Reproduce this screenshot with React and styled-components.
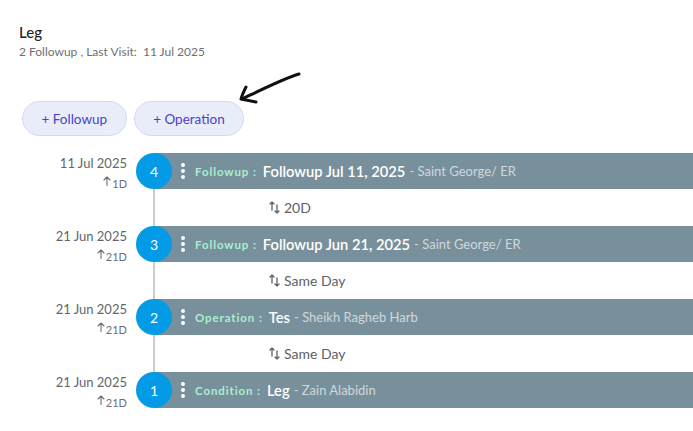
import styled, { createGlobalStyle } from "styled-components";

const GlobalStyle = createGlobalStyle`
  html, body {
    margin: 0;
    padding: 0;
    background: #ffffff;
    font-family: "Lato", "Noto Sans", sans-serif;
    overflow: hidden;
  }
`;

const Page = styled.div`
  position: relative;
  width: 693px;
  height: 431px;
  padding: 23px 0 0 19px;
  box-sizing: border-box;
`;

const Title = styled.div`
  font-size: 15px;
  font-weight: 500;
  color: #1f2328;
  line-height: 18px;
`;

const Subtitle = styled.div`
  margin-top: 3px;
  font-size: 12px;
  color: #6b6f76;
  white-space: pre;
`;

const Actions = styled.div`
  display: flex;
  gap: 7px;
  margin: 42px 0 0 3px;
`;

const PillButton = styled.button`
  height: 35px;
  padding: 0 ${(p) => p.$px}px;
  border-radius: 18px;
  border: 1px solid #d3d9f2;
  background: #e9edfa;
  color: #4a3fcf;
  font-family: inherit;
  font-size: 13.5px;
  cursor: pointer;
`;

const Arrow = styled.svg`
  position: absolute;
  left: 235px;
  top: 69px;
`;

const Timeline = styled.div`
  margin: 17px 0 0 -19px;
`;

const Row = styled.div`
  display: grid;
  grid-template-columns: 136px 1fr;
`;

const DateCol = styled.div`
  text-align: right;
  padding: 2px 9px 0 0;
  color: #62666c;
`;

const DateText = styled.div`
  font-size: 13px;
  line-height: 16px;
`;

const Since = styled.div`
  display: flex;
  justify-content: flex-end;
  align-items: flex-end;
  font-size: 11px;
  line-height: 14px;
  margin-top: 5px;
  color: #6b6f76;

  svg {
    margin: 0 1px 5px 0;
  }
`;

const Entry = styled.div`
  display: flex;
  align-items: center;
  height: 36px;
`;

const Badge = styled.div`
  position: relative;
  z-index: 1;
  flex: 0 0 36px;
  height: 36px;
  border-radius: 50%;
  background: #039be5;
  color: #fff;
  font-size: 14px;
  display: flex;
  align-items: center;
  justify-content: center;
`;

const Bar = styled.div`
  flex: 1;
  height: 36px;
  margin-left: -18px;
  padding-left: 27px;
  background: #78909c;
  display: flex;
  align-items: center;
  white-space: nowrap;
  overflow: hidden;
`;

const Kebab = styled.div`
  display: flex;
  flex-direction: column;
  gap: 2px;
  margin-right: 10px;

  i {
    width: 4px;
    height: 4px;
    border-radius: 50%;
    background: #fff;
  }
`;

const Kind = styled.span`
  color: #a8efcf;
  font-size: 11.5px;
  font-weight: 700;
  letter-spacing: 0.9px;
  margin-right: 6px;
`;

const EntryTitle = styled.span`
  color: #fff;
  font-size: 14.7px;
  font-weight: 600;
`;

const Place = styled.span`
  color: #cfd8dc;
  font-size: 13px;
  margin-left: 4px;
`;

const Gap = styled.div`
  height: 37px;
  margin-left: 17px;
  border-left: 2px solid #cccccc;
  display: flex;
  align-items: center;
  padding-left: 114px;
  font-size: 14px;
  color: #5d6168;
  gap: 4px;
`;

const UpIcon = () => (
  <svg width="8" height="10" viewBox="0 0 8 10" fill="none" stroke="#6b6f76" strokeWidth="1.1" strokeLinecap="round" strokeLinejoin="round">
    <path d="M4 9.5V1M1 4l3-3 3 3" />
  </svg>
);

const SwapIcon = () => (
  <svg width="11" height="13" viewBox="0 0 11 13" fill="none" stroke="#5d6168" strokeWidth="1.3" strokeLinecap="round" strokeLinejoin="round">
    <path d="M3 9V1M1 3l2-2 2 2" />
    <path d="M8 4v8M6 10l2 2 2-2" />
  </svg>
);

const entries = [
  { n: 4, date: "11 Jul 2025", since: "1D", kind: "Followup", title: "Followup Jul 11, 2025", place: "Saint George/ ER", gap: "20D" },
  { n: 3, date: "21 Jun 2025", since: "21D", kind: "Followup", title: "Followup Jun 21, 2025", place: "Saint George/ ER", gap: "Same Day" },
  { n: 2, date: "21 Jun 2025", since: "21D", kind: "Operation", title: "Tes", place: "Sheikh Ragheb Harb", gap: "Same Day" },
  { n: 1, date: "21 Jun 2025", since: "21D", kind: "Condition", title: "Leg", place: "Zain Alabidin" },
];

export default function App() {
  return (
    <Page>
      <GlobalStyle />
      <Title>Leg</Title>
      <Subtitle>{"2 Followup , Last Visit:  11 Jul 2025"}</Subtitle>

      <Arrow width="70" height="38" viewBox="0 0 70 38" fill="none" stroke="#111" strokeWidth="3" strokeLinecap="round" strokeLinejoin="round">
        <path d="M64 5C50 9 30 19 7 30" />
        <path d="M11 18C9 22 7 26 6 30C11 31 16 32 21 33" />
      </Arrow>

      <Actions>
        <PillButton $px={18.5}>+ Followup</PillButton>
        <PillButton $px={18.5}>+ Operation</PillButton>
      </Actions>

      <Timeline>
        {entries.map((e) => (
          <Row key={e.n}>
            <DateCol>
              <DateText>{e.date}</DateText>
              <Since><UpIcon />{e.since}</Since>
            </DateCol>
            <div>
              <Entry>
                <Badge>{e.n}</Badge>
                <Bar>
                  <Kebab><i /><i /><i /></Kebab>
                  <Kind>{e.kind} :</Kind>
                  <EntryTitle>{e.title}</EntryTitle>
                  <Place>- {e.place}</Place>
                </Bar>
              </Entry>
              {e.gap && (
                <Gap>
                  <SwapIcon />
                  {e.gap}
                </Gap>
              )}
            </div>
          </Row>
        ))}
      </Timeline>
    </Page>
  );
}
